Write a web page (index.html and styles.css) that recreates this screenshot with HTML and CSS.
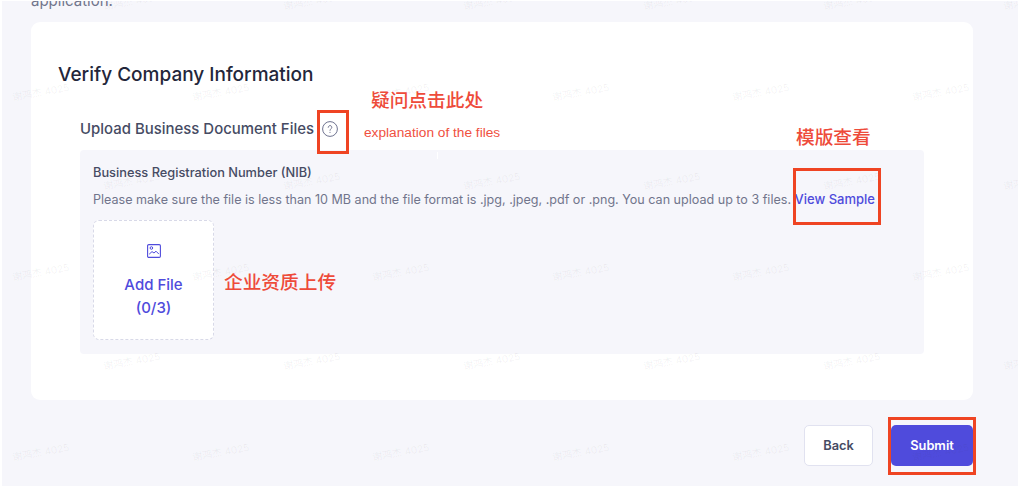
FILE: index.html
```html
<!DOCTYPE html>
<html lang="en">
<head>
<meta charset="utf-8">
<title>Verify Company Information</title>
<link rel="stylesheet" href="styles.css">
</head>
<body>
<div class="page">
  <p class="intro">application.</p>
  <section class="card">
    <h1 class="title">Verify Company Information</h1>
    <div class="label-row">
      <h2 class="label">Upload Business Document Files</h2>
      <svg class="help" viewBox="0 0 16 16" width="16" height="16" aria-hidden="true">
        <circle cx="8" cy="8" r="7.4" fill="none" stroke="#6f7390" stroke-width="1"/>
        <path d="M6.2 6.3a1.8 1.8 0 1 1 2.7 1.6c-.6.4-.9.7-.9 1.4" fill="none" stroke="#6f7390" stroke-width="1" stroke-linecap="round"/>
        <circle cx="8" cy="11.3" r=".6" fill="#6f7390"/>
      </svg>
    </div>
    <div class="panel">
      <h3 class="doc-name">Business Registration Number (NIB)</h3>
      <p class="doc-note">Please make sure the file is less than 10 MB and the file format is .jpg, .jpeg, .pdf or .png. You can upload up to 3 files. <a class="sample" href="#">View Sample</a></p>
      <div class="dropzone">
        <svg class="image-icon" viewBox="0 0 14 14" width="14" height="14" aria-hidden="true">
          <rect x=".6" y=".6" width="12.8" height="12.8" rx="1.2" fill="none" stroke="#4f4bdc" stroke-width="1.1"/>
          <circle cx="4.4" cy="4" r="1.3" fill="none" stroke="#4f4bdc" stroke-width="1"/>
          <path d="M2.2 10.2 5 7.6l2 1.4 2-1.8 2.8 2.8" fill="none" stroke="#4f4bdc" stroke-width="1"/>
        </svg>
        <span class="add">Add File</span>
        <span class="add">(0/3)</span>
      </div>
    </div>
  </section>
  <div class="actions">
    <button class="btn btn-back" type="button">Back</button>
    <button class="btn btn-submit" type="button">Submit</button>
  </div>

  <div class="marks marks-a" aria-hidden="true">
    <span>谢鸿杰 4025</span><span>谢鸿杰 4025</span><span>谢鸿杰 4025</span><span>谢鸿杰 4025</span><span>谢鸿杰 4025</span><span>谢鸿杰 4025</span>
    <span>谢鸿杰 4025</span><span>谢鸿杰 4025</span><span>谢鸿杰 4025</span><span>谢鸿杰 4025</span><span>谢鸿杰 4025</span><span>谢鸿杰 4025</span>
    <span>谢鸿杰 4025</span><span>谢鸿杰 4025</span><span>谢鸿杰 4025</span><span>谢鸿杰 4025</span><span>谢鸿杰 4025</span><span>谢鸿杰 4025</span>
  </div>
  <div class="marks marks-b" aria-hidden="true">
    <span>谢鸿杰 4025</span><span>谢鸿杰 4025</span><span>谢鸿杰 4025</span><span>谢鸿杰 4025</span><span>谢鸿杰 4025</span><span>谢鸿杰 4025</span>
    <span>谢鸿杰 4025</span><span>谢鸿杰 4025</span><span>谢鸿杰 4025</span><span>谢鸿杰 4025</span><span>谢鸿杰 4025</span><span>谢鸿杰 4025</span>
    <span>谢鸿杰 4025</span><span>谢鸿杰 4025</span><span>谢鸿杰 4025</span><span>谢鸿杰 4025</span><span>谢鸿杰 4025</span><span>谢鸿杰 4025</span>
  </div>

  <div class="box box-help"></div>
  <div class="box box-sample"></div>
  <div class="box box-submit"></div>
  <span class="note note-help">疑问点击此处</span>
  <span class="note-en">explanation of the files</span>
  <span class="tick"></span>
  <span class="note note-sample">模版查看</span>
  <span class="note note-upload">企业资质上传</span>
</div>
</body>
</html>
```
FILE: styles.css
```css
* { box-sizing: border-box; }
html, body { margin: 0; padding: 0; background: #fff; }
body { width: 1018px; height: 486px; overflow: hidden; font-family: "Inter", "Noto Sans CJK SC", sans-serif; }

.page {
  position: relative;
  width: 1016px;
  height: 485px;
  margin: 1px 0 0 2px;
  padding: 0 45px 0 29px;
  background: #f6f6fb;
  overflow: hidden;
}
.intro {
  margin: -9px 0 0;
  height: 30px;
  font-size: 15px;
  line-height: 18px;
  color: #71758c;
}
.card {
  height: 378px;
  padding: 41px 49px 0 27px;
  background: #fff;
  border-radius: 9px;
}
.title {
  margin: 0;
  font-size: 19px;
  line-height: 24px;
  font-weight: 500;
  color: #23263a;
}
.label-row {
  display: flex;
  align-items: center;
  gap: 8px;
  margin: 30px 0 0 22px;
  height: 24px;
}
.label {
  margin: 0;
  font-size: 14.95px;
  line-height: 24px;
  font-weight: 500;
  color: #464b63;
}
.help { flex: none; }
.panel {
  height: 204px;
  margin: 9px 0 0 22px;
  padding: 14px 13px 0;
  background: #f6f6fb;
  border-radius: 4px;
}
.doc-name {
  margin: 1px 0 0;
  font-size: 12.8px;
  line-height: 16px;
  font-weight: 500;
  color: #464b63;
}
.doc-note {
  margin: 10px 0 0;
  font-size: 12.57px;
  line-height: 16px;
  color: #71758c;
  white-space: nowrap;
}
.sample { font-size: 13px; color: #4f4bdc; font-weight: 500; text-decoration: none; }
.dropzone {
  display: flex;
  flex-direction: column;
  align-items: center;
  width: 121px;
  height: 120px;
  margin-top: 12px;
  padding-top: 23px;
  background: #fff;
  border: 1px dashed #d8d9e8;
  border-radius: 6px;
}
.image-icon { margin-bottom: 15px; }
.add {
  font-size: 15px;
  line-height: 23px;
  font-weight: 500;
  color: #4f4bdc;
}
.actions {
  display: flex;
  justify-content: flex-end;
  gap: 18px;
  margin-top: 25px;
}
.btn {
  height: 41px;
  border-radius: 5px;
  font: 600 12.8px "Inter", sans-serif;
}
.btn-back {
  width: 69px;
  background: #fff;
  border: 1px solid #e1e2f0;
  color: #464b63;
}
.btn-submit {
  width: 82px;
  background: #4f4bdc;
  border: 0;
  color: #fff;
}

.marks {
  position: absolute;
  display: grid;
  grid-template-columns: repeat(6, 180px);
  grid-auto-rows: 180px;
  pointer-events: none;
}
.marks span {
  font-size: 10px;
  line-height: 14px;
  white-space: nowrap;
  color: rgba(60, 60, 80, 0.07);
  transform: rotate(-10deg);
  transform-origin: left top;
  justify-self: start;
}
.marks-a { left: 9px; top: 89px; }
.marks-b { left: 100px; top: -2px; }

.box { position: absolute; border: 3px solid #ef4423; }
.box-help { left: 315px; top: 109px; width: 32px; height: 44px; }
.box-sample { left: 791px; top: 167px; width: 88px; height: 57px; }
.box-submit { left: 886px; top: 416px; width: 88px; height: 58px; }

.note {
  position: absolute;
  font-family: "Noto Sans CJK SC", sans-serif;
  font-size: 18.7px;
  line-height: 24px;
  font-weight: 500;
  color: #ee4b3a;
  white-space: nowrap;
}
.note-help { left: 369px; top: 86px; }
.note-sample { left: 794px; top: 123px; }
.note-upload { left: 222px; top: 268px; }
.note-en {
  position: absolute;
  left: 362px;
  top: 125px;
  font-family: "Liberation Sans", sans-serif;
  font-size: 13.7px;
  line-height: 14px;
  color: #f0513f;
  white-space: nowrap;
}
.tick {
  position: absolute;
  left: 435px;
  top: 151px;
  width: 1px;
  height: 7px;
  background: #fff;
}
```
